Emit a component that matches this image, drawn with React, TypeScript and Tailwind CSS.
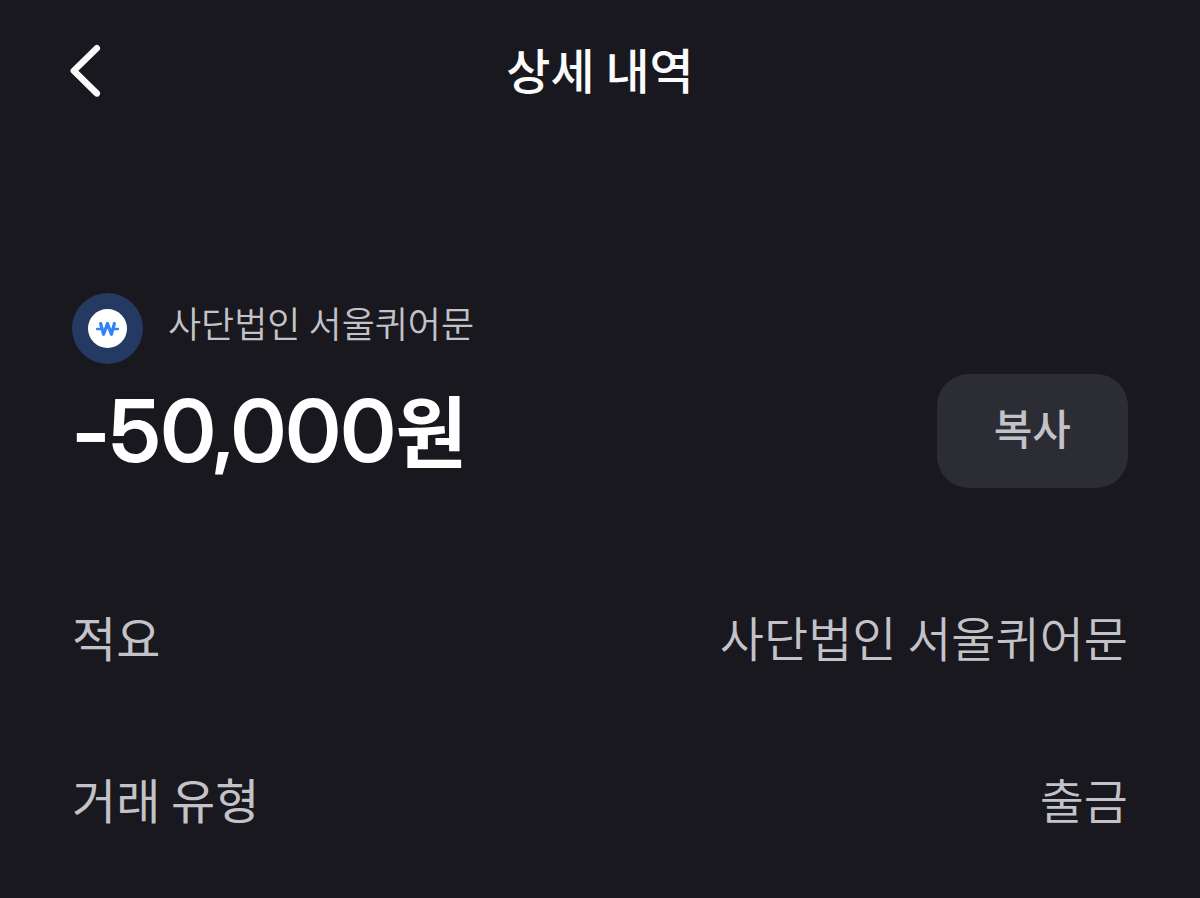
const details = [
    { label: "적요", value: "사단법인 서울퀴어문" },
    { label: "거래 유형", value: "출금" },
]

function BackIcon() {
    return (
        <svg className="h-16 w-8 overflow-visible" viewBox="0 0 32 64" fill="none" stroke="#fbfbfc" strokeWidth="6.5" strokeLinecap="round" strokeLinejoin="round" aria-hidden="true">
            <path d="M24.8 12.2L1.8 34.8L24.8 57.4" />
        </svg>
    )
}

function WonIcon() {
    return (
        <svg className="size-[72px] shrink-0" viewBox="0 0 72 72" fill="none" aria-hidden="true">
            <circle cx="35.5" cy="36.5" r="35.5" fill="#253a62" />
            <circle cx="35.5" cy="36.5" r="19.5" fill="#fff" />
            <g stroke="#3182f6" strokeLinecap="round" strokeLinejoin="round">
                <path d="M28.6 31.5L31.6 42.3L35.5 31.5L39.4 42.3L42.4 31.5" strokeWidth="3.2" />
                <path d="M25.2 37H30M41 37H45.8" strokeWidth="2.6" />
            </g>
        </svg>
    )
}

function App() {
    return (
        <div className="min-h-screen bg-[#19181e] px-[72px] pt-9 pb-16 font-['Noto_Sans_CJK_KR',sans-serif] text-[#c3c2c8]">
            <header className="grid grid-cols-[1fr_auto_1fr] items-center">
                <button type="button" aria-label="뒤로" className="justify-self-start">
                    <BackIcon />
                </button>
                <h1 className="text-5xl leading-16 font-medium text-[#fbfbfc]">상세 내역</h1>
            </header>

            <main className="pt-48">
                <div className="flex items-center gap-6">
                    <WonIcon />
                    <p className="pb-3 text-4xl font-[350]">사단법인 서울퀴어문</p>
                </div>
                <div className="mt-1.5 flex items-center justify-between">
                    <p className="pt-1 font-['Inter_Display','Inter','Noto_Sans_CJK_KR',sans-serif] text-[86px] leading-[114px] font-semibold text-white">
                        -50,000<span className="text-[78px]">원</span>
                    </p>
                    <button type="button" className="h-[114px] rounded-[32px] bg-[#2c2c35] px-[57px] pb-2 text-[42px] font-medium">
                        복사
                    </button>
                </div>

                <dl className="mt-[105px] flex flex-col gap-[82px] text-5xl leading-20">
                    {details.map((item) => (
                        <div key={item.label} className="flex items-center justify-between">
                            <dt>{item.label}</dt>
                            <dd className="font-[350]">{item.value}</dd>
                        </div>
                    ))}
                </dl>
            </main>
        </div>
    )
}

export default App
